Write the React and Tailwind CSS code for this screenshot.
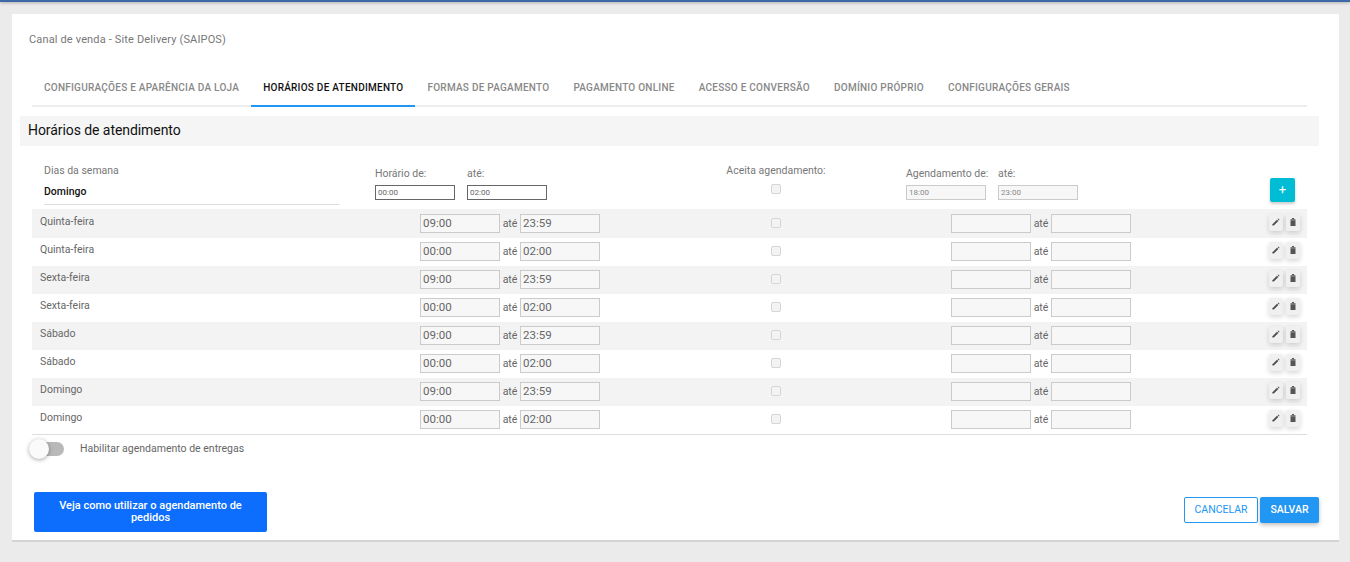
import React from 'react';

const tabs = [
  'Configurações e aparência da loja',
  'Horários de atendimento',
  'Formas de pagamento',
  'Pagamento online',
  'Acesso e conversão',
  'Domínio próprio',
  'Configurações gerais',
];

const rows = [
  ['Quinta-feira', '09:00', '23:59'],
  ['Quinta-feira', '00:00', '02:00'],
  ['Sexta-feira', '09:00', '23:59'],
  ['Sexta-feira', '00:00', '02:00'],
  ['Sábado', '09:00', '23:59'],
  ['Sábado', '00:00', '02:00'],
  ['Domingo', '09:00', '23:59'],
  ['Domingo', '00:00', '02:00'],
];

const PencilIcon = () => (
  <svg width="8" height="8" viewBox="0 0 8 8" className="fill-[#4a4a4a]">
    <path d="M0.5 7.5V6.2L5 1.7 6.3 3 1.8 7.5Z" />
    <path d="M5.6 1.1 6.3 0.5 7.5 1.7 6.9 2.4Z" />
  </svg>
);

const TrashIcon = () => (
  <svg width="8" height="8" viewBox="0 0 8 8" className="fill-[#555]">
    <path d="M3 0H5V1H6.5V1.8H1.5V1H3Z" />
    <path d="M1.5 2.2H6.5V8H1.5Z" />
  </svg>
);

const IconButton = ({ children }) => (
  <button className="flex h-[17px] w-[14px] items-center justify-center rounded-[2px] bg-[#f0f0f0] pb-[1px] shadow-[0_2px_5px_rgba(0,0,0,0.16)]">
    {children}
  </button>
);

const TimeInput = ({ value }) => (
  <input
    readOnly
    value={value}
    className="h-[19px] w-[80px] border border-[#cbcbcb] bg-[#f7f7f7] px-[2px] text-[11.5px] text-[#666] outline-none"
  />
);

const SmallInput = ({ value, disabled }) => (
  <input
    readOnly
    value={value}
    className={`h-[15px] w-[80px] px-[2px] text-[8px] outline-none ${
      disabled ? 'border border-[#cbcbcb] bg-[#f7f7f7] text-[#888]' : 'border border-[#666] bg-white text-[#666]'
    }`}
  />
);

const Checkbox = () => (
  <span className="block h-[10px] w-[10px] rounded-[2px] border border-[#d6d6d6] bg-[#f3f3f3]" />
);

export default function App() {
  return (
    <div className="min-h-[562px] bg-[#ebebeb] font-['Roboto',sans-serif]">
      <div className="h-[2px] bg-[#3f68a8] shadow-[0_1px_3px_rgba(0,0,0,0.3)]" />
      <div className="ml-[12px] mr-[11px] mt-[12px] h-[528px] border-b-2 border-[#d4d4d4] bg-white pl-[8px] pr-[20px]">
        <h1 className="pl-[9px] pt-[19px] text-[11px] leading-[13px] tracking-[0.15px] text-[#777]">
          Canal de venda - Site Delivery (SAIPOS)
        </h1>

        <nav className="mx-[12px] mt-[25px] flex h-[36px] border-b-2 border-[#eeeeee]">
          {tabs.map((tab, i) => (
            <div
              key={tab}
              className={`-mb-[2px] flex h-[36px] items-center whitespace-nowrap px-[12px] pb-[1px] text-[10px] font-medium uppercase tracking-[0.25px] ${
                i === 1 ? 'border-b-2 border-[#2196f3] text-[#111]' : 'border-b-2 border-transparent text-[#888]'
              }`}
            >
              {tab}
            </div>
          ))}
        </nav>

        <h2 className="mt-[9px] flex h-[30px] items-center bg-[#f5f5f5] pb-[2px] pl-[8px] text-[14px] tracking-[-0.07px] text-[#111]">
          Horários de atendimento
        </h2>

        <div className="mx-[12px]">
          <div className="flex h-[63px] text-[10.5px] text-[#777]">
            <div className="ml-[12px] mt-[19px] h-[40px] w-[295px] border-b border-[#dddddd]">
              <div className="leading-[12px]">Dias da semana</div>
              <div className="mt-[9px] font-medium leading-[12px] text-[#111]">Domingo</div>
            </div>
            <div className="ml-[36px] mt-[22px]">
              <div className="leading-[12px]">Horário de:</div>
              <div className="mt-[4px]"><SmallInput value="00:00" /></div>
            </div>
            <div className="ml-[12px] mt-[22px]">
              <div className="leading-[12px]">até:</div>
              <div className="mt-[4px]"><SmallInput value="02:00" /></div>
            </div>
            <div className="ml-[179px] mt-[19px] flex w-[100px] flex-col items-center">
              <div className="whitespace-nowrap leading-[12px]">Aceita agendamento:</div>
              <div className="mt-[7px]"><Checkbox /></div>
            </div>
            <div className="ml-[80px] mt-[22px] w-[80px]">
              <div className="whitespace-nowrap leading-[12px]">Agendamento de:</div>
              <div className="mt-[4px]"><SmallInput value="18:00" disabled /></div>
            </div>
            <div className="ml-[12px] mt-[22px]">
              <div className="leading-[12px]">até:</div>
              <div className="mt-[4px]"><SmallInput value="23:00" disabled /></div>
            </div>
            <button className="ml-[192px] mt-[32px] flex h-[24px] w-[25px] items-center justify-center rounded-[2px] bg-[#00bcd4] text-[13px] text-white shadow-[0_2px_3px_rgba(0,0,0,0.2)]">
              +
            </button>
          </div>

          <div className="border-b border-[#dddddd]">
            {rows.map(([day, from, to], i) => (
              <div
                key={i}
                className={`flex items-start text-[10.5px] leading-[19px] text-[#666] ${i === 0 ? 'h-[29px] pt-[5px]' : 'h-[28px] pt-[4px]'} ${i % 2 === 0 ? 'bg-[#f3f3f3]' : 'bg-white'}`}
              >
                <div className="-mt-[2px] w-[388px] pl-[8px]">{day}</div>
                <TimeInput value={from} />
                <span className="w-[20px] text-center">até</span>
                <TimeInput value={to} />
                <div className="ml-[171px] mt-[4px] w-[10px]"><Checkbox /></div>
                <div className="ml-[170px] flex items-start">
                  <TimeInput value="" />
                  <span className="w-[20px] text-center">até</span>
                  <TimeInput value="" />
                </div>
                <div className="ml-[138px] flex gap-[3px]">
                  <IconButton><PencilIcon /></IconButton>
                  <IconButton><TrashIcon /></IconButton>
                </div>
              </div>
            ))}
          </div>
        </div>

        <div className="mt-[6px] flex items-center">
          <div className="relative ml-[20px] h-[14px] w-[24px] rounded-full bg-[#b9b9b9]">
            <span className="absolute -left-[11px] -top-[3px] h-[20px] w-[20px] rounded-full bg-[#fafafa] shadow-[0_1px_4px_rgba(0,0,0,0.35)]" />
          </div>
          <span className="ml-[16px] text-[10.5px] text-[#666]">Habilitar agendamento de entregas</span>
        </div>

        <div className="mt-[35px] flex items-start justify-between">
          <button className="ml-[14px] h-[40px] w-[233px] rounded-[2px] bg-[#0d6efd] px-[16px] text-[11px] font-medium leading-[12px] text-white">
            Veja como utilizar o agendamento de pedidos
          </button>
          <div className="mt-[5px] flex gap-[2px]">
            <button className="h-[26px] w-[74px] rounded-[2px] border border-[#2196f3] bg-white text-[10.5px] text-[#2196f3]">
              CANCELAR
            </button>
            <button className="h-[26px] w-[59px] rounded-[2px] bg-[#2196f3] text-[10.5px] font-medium text-white shadow-[0_2px_4px_rgba(0,0,0,0.25)]">
              SALVAR
            </button>
          </div>
        </div>
      </div>
    </div>
  );
}
